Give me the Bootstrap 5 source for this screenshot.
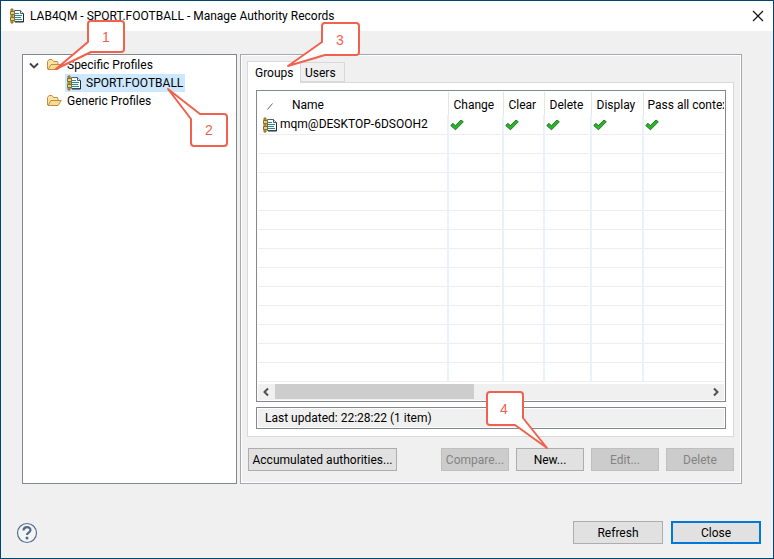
<!DOCTYPE html>
<html lang="en">
<head>
<meta charset="utf-8">
<meta name="viewport" content="width=device-width, initial-scale=1">
<title>LAB4QM - SPORT.FOOTBALL - Manage Authority Records</title>
<link href="https://cdn.jsdelivr.net/npm/bootstrap@5.3.0/dist/css/bootstrap.min.css" rel="stylesheet">
<style>
body{font:12px/18px Roboto,"Open Sans",sans-serif;color:#000;background:#f0f0f0}
.dialog{border:1px solid #00456e;min-height:100vh}
.titlebar{height:30px;padding:0 9px 0 8px;gap:5px}
.titlebar svg,.tree svg,.grid svg{flex:none}
.win-x{width:12px;height:12px;line-height:0}
.workspace{padding:23px 31px 0 21px;gap:3px}
.tree{flex:0 0 215px;border:1px solid #828790;padding:1px 0 0 5px}
.tree-row{height:18px;gap:5px}
.chosen{background:#cce8ff;padding:0 2px 0 1px;gap:4px}
.indent{padding-left:37px}
.indent-folder{padding-left:18px}
.pane{border:1px solid #a7a7ae;box-shadow:inset 0 0 0 1px #fff;padding:6px 7px 12px 6px}
.tabs{height:22px;margin-bottom:-1px;z-index:1}
.tabs .nav-link{border:1px solid #d9d9d9;border-radius:0;color:#000;background:#f0f0f0;line-height:18px;padding:1px 0 0 4px;height:20px;width:45px;text-align:left;margin-bottom:1px}
.tabs .nav-link.active{background:#fff;border-bottom:0;border-right:0;height:22px;margin:0;width:53px;padding:1px 0 0 7px}
.tab-body{border:1px solid #d9d9d9;background:#fff;padding:7px 7px 7px 8px;gap:5px}
.grid-box{border:1px solid #828790;padding:1px}
.grid{table-layout:fixed}
.grid th{font-weight:400;height:23px;padding:3px 0 0 5px;border-left:1px solid #e5e5e5;white-space:nowrap;overflow:hidden}
.grid th:last-child{padding-left:4px}
.grid td{height:19px;padding:1px 0 0 1px;border-left:2px solid #e9f1fb;border-bottom:1px solid #eee;line-height:17px}
.grid th:first-child,.grid td:first-child{border-left:0}
.grid th:first-child{padding-left:8px}
.grid td svg{display:block}
.rec-name{padding-left:3px;gap:2px}
.sort-mark{margin-right:18px}
.c-name{width:190px}.c-change{width:55px}.c-clear{width:41px}.c-delete{width:47px}.c-display{width:52px}
.scroller{height:16px;background:#f0f0f0;margin-top:2px}
.scroller button{width:17px;height:16px;line-height:0}
.thumb{width:46%;height:15px;background:#cdcdcd}
.status{border:1px solid #828790;box-shadow:inset 0 0 0 1px #fff;background:#f0f0f0;height:22px;line-height:20px;padding-left:8px}
.wbtn{--bs-btn-font-size:12px;--bs-btn-line-height:18px;--bs-btn-padding-x:3px;--bs-btn-padding-y:2px;--bs-btn-border-radius:0;--bs-btn-color:#000;--bs-btn-bg:#e1e1e1;--bs-btn-border-color:#adadad;--bs-btn-hover-bg:#e5f1fb;--bs-btn-disabled-color:#838383;--bs-btn-disabled-bg:#ccc;--bs-btn-disabled-border-color:#bfbfbf;--bs-btn-disabled-opacity:1;min-width:68px;height:23px;white-space:nowrap}
.foot-btn{min-width:90px}
.primary-btn{border:2px solid #0078d7;padding-top:1px}
.accum{width:149px}
.actions{padding:11px 0 0 1px;gap:7px}
.footer-bar{padding:37px 12px 14px 15px;gap:8px}
.callout{position:absolute;z-index:5;pointer-events:none;overflow:visible}
.callout path{fill:#fff;stroke:#f0614f;stroke-width:2;stroke-linejoin:round}
.callout text{font:14px "Liberation Sans",Arial,sans-serif;fill:#f0614f;text-anchor:middle}
.to-folder{left:9px;bottom:3px}
.to-profile{left:102px;top:13px}
.to-tab{left:40px;bottom:15px}
.to-new{right:36px;bottom:22px}
</style>
<script src="https://cdn.jsdelivr.net/npm/bootstrap@5.3.0/dist/js/bootstrap.bundle.min.js" defer></script>
</head>
<body>
<svg class="d-none" aria-hidden="true">
  <symbol id="record" viewBox="0 0 16 16">
    <path d="M5.500 2.500h6l3 3v8h-9z" fill="#fafdff" stroke="#56616b"/>
    <path d="M14.500 5.500v8.500H6" fill="none" stroke="#2c2530"/>
    <path d="M11.500 2.500v3h3" fill="#dfe5ea" stroke="#4d5a63"/>
    <path d="M6 5.500h4M6 7.500h7M6 9.500h6M6 11.500h7" stroke="#2d8a84"/>
    <path d="M2 1h2v14H2z" fill="#c2a142" stroke="#8a7023"/>
    <path d="M1.500 3.500h4v3h-4zM1.500 9.500h4v3h-4z" fill="#e8d080" stroke="#8a7023"/>
  </symbol>
  <symbol id="folder" viewBox="0 0 16 16">
    <path d="M1.500 12V4.500L3 2.500h3L7.500 4.500h4L12 6v2" fill="#fbe3a4" stroke="#c68d3f"/>
    <path d="M2 12.500 5 7.500h10.300L12 12.500z" fill="#fbd998" stroke="#c68d3f" stroke-linejoin="round"/>
  </symbol>
  <symbol id="tick" viewBox="0 0 14 12">
    <path d="M.7 6.500 3 4.300l2.300 2.300L11 1l2.300 1.800L5.500 10.800z" fill="#27b427" stroke="#216b21" stroke-width=".9"/>
  </symbol>
</svg>
<div class="dialog d-flex flex-column">
  <header class="titlebar bg-white d-flex align-items-center">
    <svg width="16" height="16" aria-hidden="true"><use href="#record"/></svg>
    <span class="me-auto">LAB4QM - SPORT.FOOTBALL - Manage Authority Records</span>
    <button class="win-x btn p-0 border-0" aria-label="Close window"><svg width="12" height="12"><path d="M1 1l10 10M11 1 1 11" stroke="#111" stroke-width="1.200"/></svg></button>
  </header>
  <main class="workspace d-flex flex-grow-1">
    <nav class="tree bg-white" aria-label="Profiles">
      <div class="tree-row d-flex align-items-center">
        <svg width="13" height="16" aria-hidden="true"><path d="M2 6.500l4 4 4-4" fill="none" stroke="#404040" stroke-width="1.800"/></svg>
        <span class="position-relative d-flex">
          <svg width="16" height="16" aria-hidden="true"><use href="#folder"/></svg>
          <svg class="callout to-folder" width="70" height="50" aria-label="Step 1"><path d="M36 1h30q3 0 3 3v25q0 3-3 3H36L1 49 33 22V4q0-3 3-3z"/><text x="51" y="22">1</text></svg>
        </span>
        <span>Specific Profiles</span>
      </div>
      <div class="tree-row indent d-flex">
        <span class="chosen tree-row position-relative d-flex align-items-center">
          <svg width="16" height="16" aria-hidden="true"><use href="#record"/></svg>
          <span>SPORT.FOOTBALL</span>
          <svg class="callout to-profile" width="60" height="60" aria-label="Step 2"><path d="M33 27h24q3 0 3 3v26q0 3-3 3H27q-3 0-3-3V32L1 2z"/><text x="42" y="48">2</text></svg>
        </span>
      </div>
      <div class="tree-row indent-folder d-flex align-items-center">
        <svg width="16" height="16" aria-hidden="true"><use href="#folder"/></svg><span>Generic Profiles</span>
      </div>
    </nav>
    <section class="pane d-flex flex-column flex-grow-1">
      <div class="tabs nav position-relative align-items-end flex-nowrap" role="tablist">
        <button class="nav-link active" role="tab" aria-selected="true">Groups</button>
        <button class="nav-link" role="tab" aria-selected="false">Users</button>
        <svg class="callout to-tab" width="72" height="46" aria-label="Step 3"><path d="M38 1h31q3 0 3 3v26q0 3-3 3H38L1 44 35 20V4q0-3 3-3z"/><text x="53" y="23">3</text></svg>
      </div>
      <div class="tab-body d-flex flex-column flex-grow-1">
        <div class="grid-box d-flex flex-column flex-grow-1">
          <table class="grid w-100">
            <thead><tr>
              <th class="c-name"><svg class="sort-mark" width="8" height="8" aria-hidden="true"><path d="M1.500 7.500 6.500 1.500" stroke="#666"/></svg><span>Name</span></th>
              <th class="c-change">Change</th><th class="c-clear">Clear</th><th class="c-delete">Delete</th><th class="c-display">Display</th><th>Pass all contex</th>
            </tr></thead>
            <tbody>
              <tr><td><span class="rec-name d-flex align-items-center text-nowrap"><svg width="16" height="16" aria-hidden="true"><use href="#record"/></svg>mqm@DESKTOP-6DSOOH2</span></td>
              <td><svg width="14" height="12" role="img" aria-label="Yes"><use href="#tick"/></svg></td><td><svg width="14" height="12" role="img" aria-label="Yes"><use href="#tick"/></svg></td><td><svg width="14" height="12" role="img" aria-label="Yes"><use href="#tick"/></svg></td><td><svg width="14" height="12" role="img" aria-label="Yes"><use href="#tick"/></svg></td><td><svg width="14" height="12" role="img" aria-label="Yes"><use href="#tick"/></svg></td></tr>
              <tr><td></td><td></td><td></td><td></td><td></td><td></td></tr>
              <tr><td></td><td></td><td></td><td></td><td></td><td></td></tr>
              <tr><td></td><td></td><td></td><td></td><td></td><td></td></tr>
              <tr><td></td><td></td><td></td><td></td><td></td><td></td></tr>
              <tr><td></td><td></td><td></td><td></td><td></td><td></td></tr>
              <tr><td></td><td></td><td></td><td></td><td></td><td></td></tr>
              <tr><td></td><td></td><td></td><td></td><td></td><td></td></tr>
              <tr><td></td><td></td><td></td><td></td><td></td><td></td></tr>
              <tr><td></td><td></td><td></td><td></td><td></td><td></td></tr>
              <tr><td></td><td></td><td></td><td></td><td></td><td></td></tr>
              <tr><td></td><td></td><td></td><td></td><td></td><td></td></tr>
              <tr><td></td><td></td><td></td><td></td><td></td><td></td></tr>
              <tr><td></td><td></td><td></td><td></td><td></td><td></td></tr>
            </tbody>
          </table>
          <div class="scroller d-flex align-items-center">
            <button class="btn p-0 border-0" aria-label="Scroll left"><svg width="17" height="16"><path d="M10 4.500 6.500 8 10 11.500" fill="none" stroke="#505050" stroke-width="2"/></svg></button>
            <div class="flex-grow-1"><div class="thumb"></div></div>
            <button class="btn p-0 border-0" aria-label="Scroll right"><svg width="17" height="16"><path d="M7 4.500 10.500 8 7 11.500" fill="none" stroke="#505050" stroke-width="2"/></svg></button>
          </div>
        </div>
        <div class="status">Last updated: 22:28:22 (1 item)</div>
      </div>
      <div class="actions d-flex">
        <button class="btn wbtn accum me-auto">Accumulated authorities...</button>
        <button class="btn wbtn" disabled>Compare...</button>
        <span class="position-relative d-flex"><button class="btn wbtn">New...</button>
          <svg class="callout to-new" width="62" height="58" aria-label="Step 4"><path d="M4 1h30q3 0 3 3v23L61 57 29 34H4q-3 0-3-3V4q0-3 3-3z"/><text x="18" y="23">4</text></svg></span>
        <button class="btn wbtn" disabled>Edit...</button>
        <button class="btn wbtn" disabled>Delete</button>
      </div>
    </section>
  </main>
  <footer class="footer-bar d-flex align-items-center">
    <button class="btn p-0 border-0 me-auto lh-1" aria-label="Help"><svg class="d-block" width="22" height="22"><circle cx="11" cy="11" r="9.500" fill="#f3f4f6" stroke="#5a6f8e" stroke-width="1.200"/><path d="M7.500 8.500C7.500 4 14.500 4 14.500 8c0 2.700-3.500 2.500-3.500 5" fill="none" stroke="#546a8b" stroke-width="2.200"/><circle cx="11" cy="16" r="1.500" fill="#546a8b"/></svg></button>
    <button class="btn wbtn foot-btn">Refresh</button>
    <button class="btn wbtn foot-btn primary-btn">Close</button>
  </footer>
</div>
</body>
</html>
